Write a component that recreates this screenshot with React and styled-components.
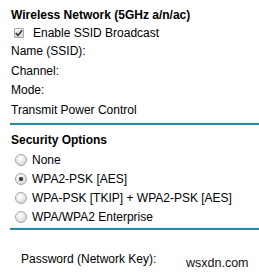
import React from 'react';
import styled, { createGlobalStyle } from 'styled-components';

const GlobalStyle = createGlobalStyle`
  html, body {
    margin: 0;
    padding: 0;
    background: #ffffff;
  }
  body {
    font-family: "Liberation Sans", Arial, sans-serif;
    font-size: 12px;
    color: #000000;
  }
`;

const Page = styled.div`
  position: relative;
  width: 259px;
  height: 274px;
  overflow: hidden;
  padding-top: 6px;
  box-sizing: border-box;
`;

const Section = styled.div`
  display: flex;
  flex-direction: column;
  padding-left: 11px;
`;

const Heading = styled.div`
  font-weight: bold;
  height: ${(p) => p.$h || 18}px;
  line-height: ${(p) => p.$h || 18}px;
`;

const Row = styled.label`
  display: flex;
  align-items: center;
  gap: ${(p) => p.$gap || 8}px;
  height: ${(p) => p.$h || 19}px;
  padding-left: ${(p) => p.$indent || 0}px;
`;

const FieldLabel = styled.div`
  height: ${(p) => p.$h || 19.5}px;
  line-height: ${(p) => p.$h || 19.5}px;
  padding-left: ${(p) => p.$indent || 0}px;
`;

const Box = styled.span`
  width: 8px;
  height: 8px;
  border: 1px solid #a8a8a8;
  border-radius: 1px;
  background: linear-gradient(#f6f6f6, #d8d8d8);
  display: flex;
  align-items: center;
  justify-content: center;
`;

const Radio = styled.span`
  width: 10px;
  height: 10px;
  border: 1px solid #a6a6a6;
  border-radius: 50%;
  background: radial-gradient(circle at 40% 35%, #ffffff 0%, #ebebeb 45%, #c6c6c6 100%);
  display: flex;
  align-items: center;
  justify-content: center;
`;

const Dot = styled.span`
  width: 4px;
  height: 4px;
  border-radius: 50%;
  background: #3c3c3c;
  box-shadow: 0 0 1px #6a6a6a;
`;

const Divider = styled.div`
  margin-left: 10px;
  height: 2px;
  background: #2a8aa6;
  box-shadow: 0 -1px 0 #dcf4f8;
  margin-top: ${(p) => p.$top || 4}px;
  margin-bottom: ${(p) => p.$bottom || 6}px;
`;

const Watermark = styled.div`
  position: absolute;
  left: 186px;
  top: 256px;
  font-size: 12.5px;
  color: #111111;
`;

function Check() {
  return (
    <Box>
      <svg width="8" height="8" viewBox="0 0 8 8">
        <path d="M0.8 4 L3 6.4 L7.2 1.2" fill="none" stroke="#404040" strokeWidth="1.7" />
      </svg>
    </Box>
  );
}

export default function App() {
  const options = [
    { label: 'None', checked: false },
    { label: 'WPA2-PSK [AES]', checked: true },
    { label: 'WPA-PSK [TKIP] + WPA2-PSK [AES]', checked: false },
    { label: 'WPA/WPA2 Enterprise', checked: false },
  ];

  return (
    <Page>
      <GlobalStyle />
      <Section>
        <Heading>Wireless Network (5GHz a/n/ac)</Heading>
        <Row $indent={3} $gap={9} $h={18}>
          <Check />
          <span>Enable SSID Broadcast</span>
        </Row>
        <FieldLabel>Name (SSID):</FieldLabel>
        <FieldLabel>Channel:</FieldLabel>
        <FieldLabel>Mode:</FieldLabel>
        <FieldLabel>Transmit Power Control</FieldLabel>
      </Section>
      <Divider $top={3} $bottom={6} />
      <Section>
        <Heading $h={19}>Security Options</Heading>
        {options.map((o) => (
          <Row key={o.label} $indent={4} $gap={5}>
            <Radio>{o.checked && <Dot />}</Radio>
            <span>{o.label}</span>
          </Row>
        ))}
      </Section>
      <Divider $top={2} $bottom={20} />
      <Section>
        <FieldLabel $indent={10} $h={18}>Password (Network Key):</FieldLabel>
      </Section>
      <Watermark>wsxdn.com</Watermark>
    </Page>
  );
}
